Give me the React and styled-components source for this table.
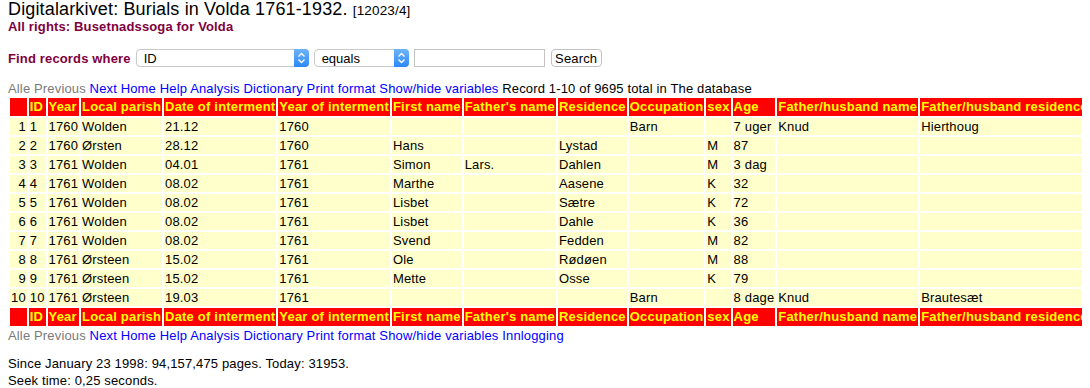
import React from "react";
import styled, { createGlobalStyle } from "styled-components";

const GlobalStyle = createGlobalStyle`
  html, body { background: #ffffff; }
  body {
    margin: 0 8px;
    font-family: "Liberation Sans", Arial, Helvetica, sans-serif;
    font-size: 13px;
    letter-spacing: 0.15px;
    color: #000000;
  }
`;

const Title = styled.div`
  font-size: 18px;
  line-height: 19px;
  height: 19px;
  white-space: nowrap;
`;

const Ref = styled.span`
  font-size: 13.5px;
`;

const Rights = styled.div`
  font-weight: bold;
  color: #800040;
  line-height: 15px;
`;

const SearchForm = styled.form`
  display: flex;
  align-items: center;
  gap: 5px;
  height: 20px;
  margin: 14px 0 13px;
`;

const Label = styled.span`
  font-weight: bold;
  color: #800040;
`;

const SelectWrap = styled.span`
  position: relative;
  display: inline-flex;
  height: 18px;
`;

const Select = styled.select`
  appearance: none;
  -webkit-appearance: none;
  box-sizing: border-box;
  width: ${(p) => p.$w}px;
  height: 18px;
  margin: 0;
  padding: 0 18px 0 7px;
  border: 1px solid #c9c9c9;
  border-radius: 4px;
  background: #ffffff;
  font-family: "Liberation Sans", Arial, sans-serif;
  font-size: 13px;
  color: #000;
  outline: none;
`;

const Stepper = styled.span`
  position: absolute;
  top: 0;
  right: 0;
  bottom: 0;
  width: 15px;
  border-radius: 0 4px 4px 0;
  background: linear-gradient(#6fb4fb, #2b88f9);
  display: flex;
  align-items: center;
  justify-content: center;
  pointer-events: none;
`;

const TextInput = styled.input`
  box-sizing: border-box;
  width: 131px;
  height: 18px;
  margin: 0;
  padding: 0 3px;
  border: 1px solid #c4c4c4;
  font-size: 13px;
  outline: none;
`;

const Button = styled.button`
  box-sizing: border-box;
  height: 18px;
  width: 51px;
  margin: 0 0 0 1px;
  padding: 0;
  border: 1px solid #c2c2c2;
  border-radius: 4px;
  background: #ffffff;
  font-family: "Liberation Sans", Arial, sans-serif;
  font-size: 13px;
  letter-spacing: 0.15px;
  color: #000;
`;

const Nav = styled.div`
  line-height: 15px;
  white-space: nowrap;
`;

const Link = styled.a`
  color: ${(p) => (p.$muted ? "#7a7a7a" : "#0000ff")};
  text-decoration: none;
`;

const Table = styled.table`
  border-collapse: separate;
  border-spacing: 2px;
  margin: 0;
  font-size: 13px;
`;

const Th = styled.th`
  background: #ff0000;
  color: #ffff00;
  font-weight: bold;
  text-align: left;
  padding: 1px;
  line-height: 16px;
  letter-spacing: 0.2px;
  white-space: nowrap;
`;

const Td = styled.td`
  background: #ffffcc;
  padding: 1px;
  line-height: 15px;
  text-align: ${(p) => (p.$right ? "right" : "left")};
  white-space: nowrap;
`;

const Footer = styled.div`
  margin-top: 12px;
  line-height: 17px;
`;

const headers = [
  "",
  "ID",
  "Year",
  "Local parish",
  "Date of interment",
  "Year of interment",
  "First name",
  "Father's name",
  "Residence",
  "Occupation",
  "sex",
  "Age",
  "Father/husband name",
  "Father/husband residence",
];

const rows = [
  ["1", "1", "1760", "Wolden", "21.12", "1760", "", "", "", "Barn", "", "7 uger", "Knud", "Hierthoug"],
  ["2", "2", "1760", "Ørsten", "28.12", "1760", "Hans", "", "Lystad", "", "M", "87", "", ""],
  ["3", "3", "1761", "Wolden", "04.01", "1761", "Simon", "Lars.", "Dahlen", "", "M", "3 dag", "", ""],
  ["4", "4", "1761", "Wolden", "08.02", "1761", "Marthe", "", "Aasene", "", "K", "32", "", ""],
  ["5", "5", "1761", "Wolden", "08.02", "1761", "Lisbet", "", "Sætre", "", "K", "72", "", ""],
  ["6", "6", "1761", "Wolden", "08.02", "1761", "Lisbet", "", "Dahle", "", "K", "36", "", ""],
  ["7", "7", "1761", "Wolden", "08.02", "1761", "Svend", "", "Fedden", "", "M", "82", "", ""],
  ["8", "8", "1761", "Ørsteen", "15.02", "1761", "Ole", "", "Rødøen", "", "M", "88", "", ""],
  ["9", "9", "1761", "Ørsteen", "15.02", "1761", "Mette", "", "Osse", "", "K", "79", "", ""],
  ["10", "10", "1761", "Ørsteen", "19.03", "1761", "", "", "", "Barn", "", "8 dage", "Knud", "Brautesæt"],
];

const StepIcon = () => (
  <svg width="9" height="12" viewBox="0 0 9 12">
    <path d="M1.5 4.5 L4.5 1.5 L7.5 4.5" fill="none" stroke="#fff" strokeWidth="1.4" />
    <path d="M1.5 7.5 L4.5 10.5 L7.5 7.5" fill="none" stroke="#fff" strokeWidth="1.4" />
  </svg>
);

const Dropdown = ({ w, value, options }) => (
  <SelectWrap>
    <Select $w={w} defaultValue={value}>
      {options.map((o) => (
        <option key={o}>{o}</option>
      ))}
    </Select>
    <Stepper>
      <StepIcon />
    </Stepper>
  </SelectWrap>
);

const NavLinks = ({ children }) => (
  <Nav>
    <Link $muted>Alle</Link> <Link $muted>Previous</Link> <Link href="#">Next</Link>{" "}
    <Link href="#">Home</Link> <Link href="#">Help</Link> <Link href="#">Analysis</Link>{" "}
    <Link href="#">Dictionary</Link> <Link href="#">Print format</Link>{" "}
    <Link href="#">Show/hide variables</Link> {children}
  </Nav>
);

const HeaderRow = () => (
  <tr>
    {headers.map((h, i) => (
      <Th key={i}>{h}</Th>
    ))}
  </tr>
);

export default function App() {
  return (
    <>
      <GlobalStyle />
      <Title>
        Digitalarkivet: Burials in Volda 1761-1932. <Ref>[12023/4]</Ref>
      </Title>
      <Rights>All rights: Busetnadssoga for Volda</Rights>
      <SearchForm onSubmit={(e) => e.preventDefault()}>
        <Label>Find records where</Label>
        <Dropdown w={173} value="ID" options={["ID", "Year", "Local parish", "First name"]} />
        <Dropdown w={95} value="equals" options={["equals", "contains", "starts with"]} />
        <TextInput type="text" />
        <Button type="submit">Search</Button>
      </SearchForm>
      <NavLinks>Record 1-10 of 9695 total in The database</NavLinks>
      <Table>
        <thead>
          <HeaderRow />
        </thead>
        <tbody>
          {rows.map((r) => (
            <tr key={r[0]}>
              {r.map((c, i) => (
                <Td key={i} $right={i === 0}>
                  {c}
                </Td>
              ))}
            </tr>
          ))}
        </tbody>
        <tfoot>
          <HeaderRow />
        </tfoot>
      </Table>
      <NavLinks>
        <Link href="#">Innlogging</Link>
      </NavLinks>
      <Footer>
        Since January 23 1998: 94,157,475 pages. Today: 31953.
        <br />
        Seek time: 0,25 seconds.
      </Footer>
    </>
  );
}
